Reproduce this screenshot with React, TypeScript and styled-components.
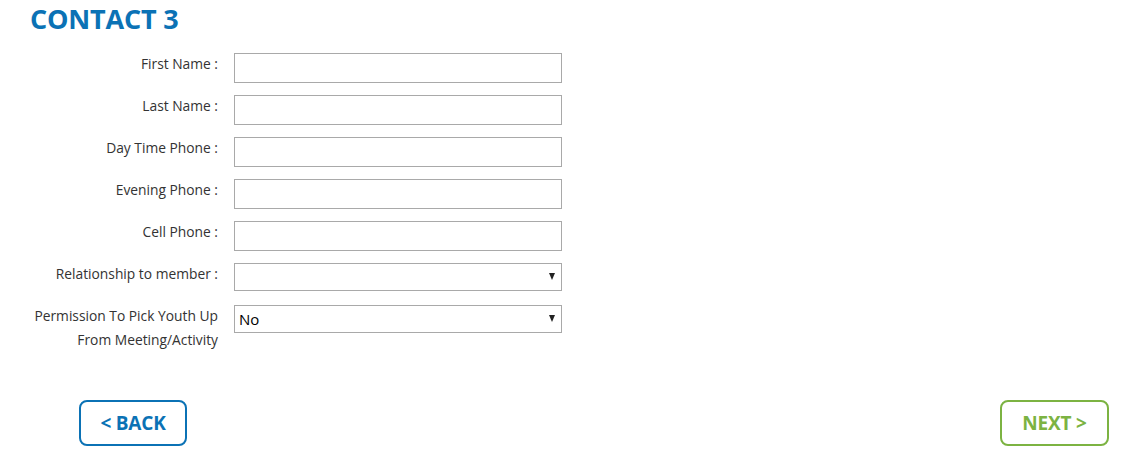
import React from "react";
import styled, { createGlobalStyle } from "styled-components";

const Global = createGlobalStyle`
  html, body { margin: 0; padding: 0; background: #fff; }
  body { font-family: "Open Sans", "Noto Sans", sans-serif; color: #333; }
  * { box-sizing: border-box; }
`;

const Page = styled.div`
  width: 1144px;
  height: 470px;
  padding: 4px 35px 0 30px;
  display: flex;
  flex-direction: column;
`;

const Title = styled.h2`
  margin: 0;
  font-size: 27px;
  line-height: 30px;
  font-weight: 700;
  color: #0b72b5;
  letter-spacing: -0.2px;
`;

const Form = styled.div`
  margin-top: 19px;
  display: grid;
  grid-template-columns: 188px 328px;
  column-gap: 16px;
  row-gap: 12px;
  align-items: start;
`;

const Label = styled.label`
  margin-top: -1px;
  text-align: right;
  font-size: 13.8px;
  line-height: 24px;
  color: #333;
`;

const Input = styled.input`
  width: 328px;
  height: 30px;
  border: 1px solid #a9a9a9;
  background: #fff;
  margin: 0;
  padding: 0 4px;
  font: inherit;
  outline: none;
`;

const SelectWrap = styled.div`
  position: relative;
  width: 328px;
  height: 28px;
  margin-bottom: 2px;
`;

const Select = styled.select`
  appearance: none;
  -webkit-appearance: none;
  width: 100%;
  height: 28px;
  border: 1px solid #a9a9a9;
  border-radius: 0;
  background: #fff;
  margin: 0;
  padding: 0 4px;
  font-family: "Open Sans", "Noto Sans", sans-serif;
  font-size: 15px;
  color: #000;
  outline: none;
`;

const Arrow = styled.span`
  position: absolute;
  right: 7px;
  top: 10px;
  width: 0;
  height: 0;
  border-left: 3.5px solid transparent;
  border-right: 3.5px solid transparent;
  border-top: 7px solid #222;
  pointer-events: none;
`;

const Footer = styled.div`
  margin-top: auto;
  margin-bottom: 24px;
  padding-left: 49px;
  display: flex;
  justify-content: space-between;
`;

const NavButton = styled.button<{ $color: string; $w: number }>`
  width: ${(p) => p.$w}px;
  height: 46px;
  border: 2px solid ${(p) => p.$color};
  border-radius: 8px;
  background: #fff;
  color: ${(p) => p.$color};
  font-family: "Open Sans", "Noto Sans", sans-serif;
  font-weight: 700;
  font-size: 19px;
  letter-spacing: -0.2px;
  padding: 0;
  cursor: pointer;
`;

const fields = ["First Name :", "Last Name :", "Day Time Phone :", "Evening Phone :", "Cell Phone :"];

export default function App() {
  return (
    <>
      <Global />
      <Page>
        <Title>CONTACT 3</Title>
        <Form>
          {fields.map((f) => (
            <React.Fragment key={f}>
              <Label>{f}</Label>
              <Input type="text" />
            </React.Fragment>
          ))}
          <Label>Relationship to member :</Label>
          <SelectWrap>
            <Select defaultValue="">
              <option value=""></option>
            </Select>
            <Arrow />
          </SelectWrap>
          <Label>
            Permission To Pick Youth Up
            <br />
            From Meeting/Activity
          </Label>
          <SelectWrap>
            <Select defaultValue="No">
              <option value="No">No</option>
              <option value="Yes">Yes</option>
            </Select>
            <Arrow />
          </SelectWrap>
        </Form>
        <Footer>
          <NavButton $color="#0b72b5" $w={108}>&lt; BACK</NavButton>
          <NavButton $color="#7cb342" $w={109}>NEXT &gt;</NavButton>
        </Footer>
      </Page>
    </>
  );
}
